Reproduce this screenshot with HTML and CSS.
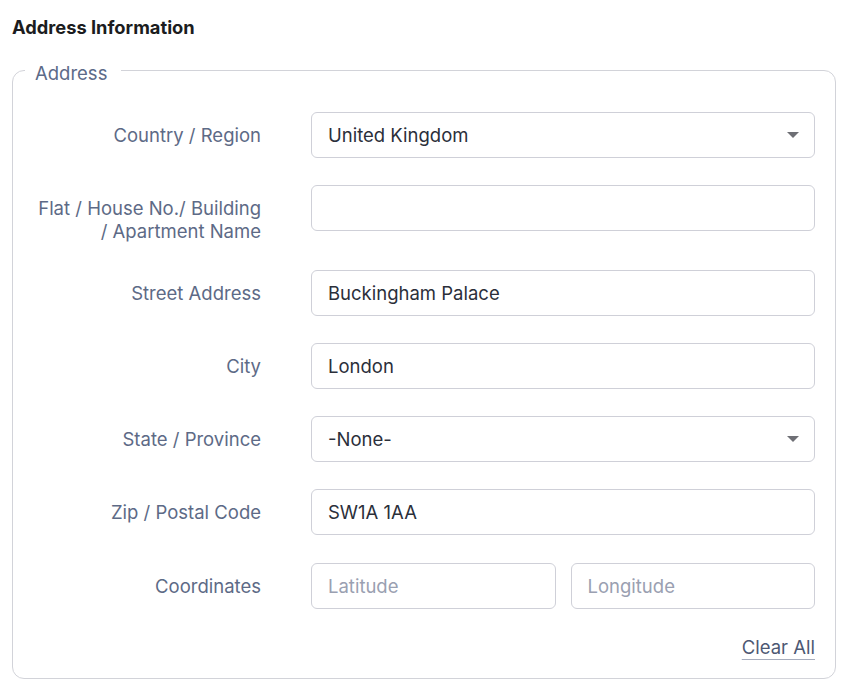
FILE: index.html
```html
<!DOCTYPE html>
<html lang="en">
<head>
  <meta charset="UTF-8">
  <title>Address Information</title>
  <link rel="stylesheet" href="styles.css">
</head>
<body>
  <h3 class="section-title">Address Information</h3>

  <fieldset class="address-box">
    <legend>Address</legend>

    <div class="field-row">
      <label>Country / Region</label>
      <div class="select-box">
        <span>United Kingdom</span>
        <svg class="caret" width="12" height="6" viewBox="0 0 12 6"><path d="M0 0h12L6 6z" fill="#6e6f75"/></svg>
      </div>
    </div>

    <div class="field-row">
      <label>Flat / House No./ Building<br>/ Apartment Name</label>
      <input class="text-input" type="text" value="">
    </div>

    <div class="field-row">
      <label>Street Address</label>
      <input class="text-input" type="text" value="Buckingham Palace">
    </div>

    <div class="field-row">
      <label>City</label>
      <input class="text-input" type="text" value="London">
    </div>

    <div class="field-row">
      <label>State / Province</label>
      <div class="select-box">
        <span>-None-</span>
        <svg class="caret" width="12" height="6" viewBox="0 0 12 6"><path d="M0 0h12L6 6z" fill="#6e6f75"/></svg>
      </div>
    </div>

    <div class="field-row">
      <label>Zip / Postal Code</label>
      <input class="text-input" type="text" value="SW1A 1AA">
    </div>

    <div class="field-row">
      <label>Coordinates</label>
      <div class="coords">
        <input class="text-input" type="text" placeholder="Latitude">
        <input class="text-input" type="text" placeholder="Longitude">
      </div>
    </div>

    <div class="box-actions">
      <a href="#" class="clear-link">Clear All</a>
    </div>
  </fieldset>
</body>
</html>
```

FILE: styles.css
```css
body {
  margin: 0;
  padding: 16px 12px;
  font-family: Inter, "Noto Sans", sans-serif;
  background: #fff;
  color: #2b2f3a;
}

.section-title {
  margin: 0;
  font-size: 18.3px;
  line-height: 23px;
  font-weight: 700;
  color: #1b1c20;
}

.address-box {
  width: 824px;
  box-sizing: border-box;
  margin: 17px 0 0;
  padding: 26.5px 20px 19px 0;
  border: 1px solid #d2d3d9;
  border-radius: 12px;
}

/* extra top padding drops the legend text a little below the border line */
.address-box legend {
  margin-left: 12px;
  padding: 6px 14px 0 10px;
  font-size: 18.5px;
  line-height: 23px;
  color: #5c6a88;
}

.field-row {
  display: grid;
  grid-template-columns: 248px 1fr;
  column-gap: 50px;
  align-items: start;
  margin-bottom: 27.2px;
}

.field-row label {
  padding-top: 12px;
  font-size: 18.5px;
  line-height: 23px;
  text-align: right;
  color: #5d6a86;
}

.text-input,
.select-box {
  box-sizing: border-box;
  width: 100%;
  height: 46px;
  padding: 0 15px 0 16px;
  border: 1px solid #cfd0d8;
  border-radius: 6px;
  background: #fff;
  font-family: inherit;
  font-size: 18.5px;
  color: #2b2f3a;
  outline: none;
}

.text-input::placeholder {
  color: #9aa0b1;
}

.select-box {
  display: flex;
  align-items: center;
  justify-content: space-between;
}

.caret {
  display: block;
}

.coords {
  display: grid;
  grid-template-columns: 1fr 1fr;
  column-gap: 15px;
}

.box-actions {
  display: flex;
  justify-content: flex-end;
  margin-top: 1px;
}

.clear-link {
  font-size: 18.5px;
  line-height: 23px;
  color: #4d5873;
  text-decoration: underline;
  text-decoration-color: #a7adbd;
  text-underline-offset: 5px;
}
```
